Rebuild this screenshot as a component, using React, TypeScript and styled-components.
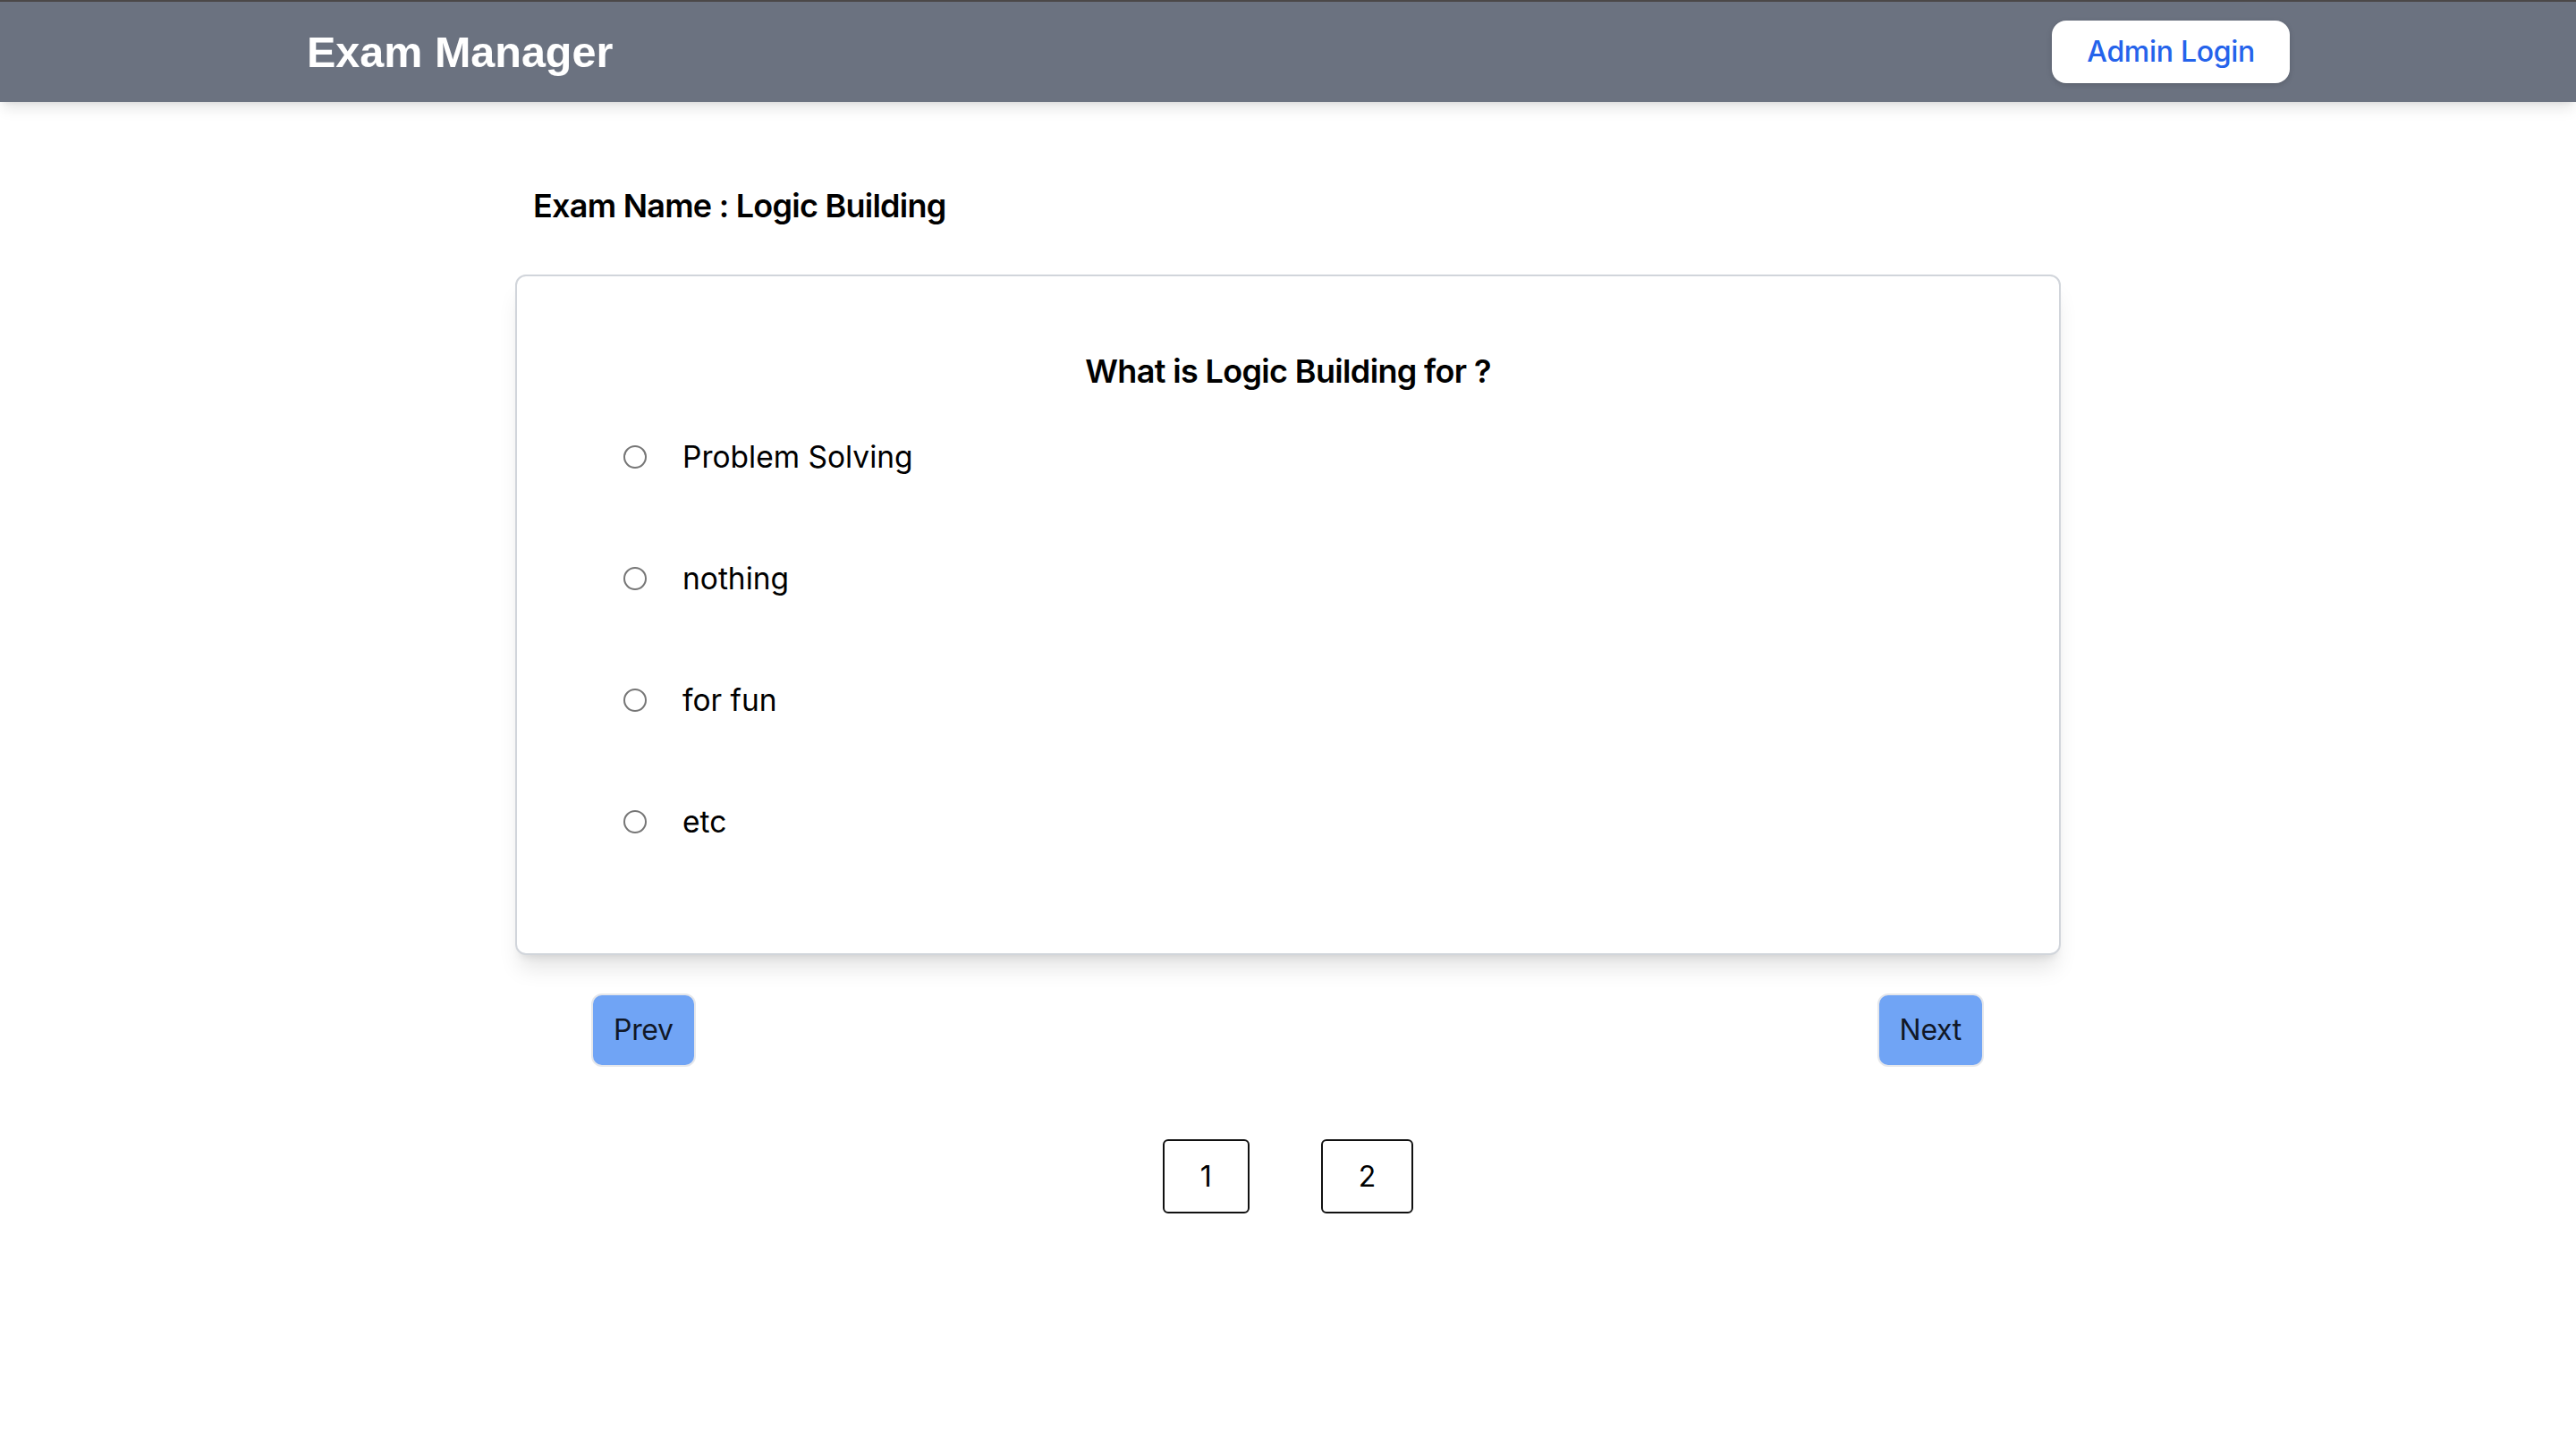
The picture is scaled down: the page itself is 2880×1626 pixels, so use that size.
import React, { useState } from 'react';
import styled, { createGlobalStyle } from 'styled-components';

const options = ['Problem Solving', 'nothing', 'for fun', 'etc'];
const pages = [1, 2];

const App: React.FC = () => {
  const [selected, setSelected] = useState<number | null>(null);

  return (
    <>
      <GlobalStyle />
      <Header>
        <Brand>Exam Manager</Brand>
        <AdminButton type="button">Admin Login</AdminButton>
      </Header>
      <Main>
        <ExamTitle>Exam Name : Logic Building</ExamTitle>
        <Card>
          <Question>What is Logic Building for ?</Question>
          <OptionList>
            {options.map((opt, i) => (
              <OptionRow key={opt}>
                <Radio
                  type="radio"
                  name="answer"
                  checked={selected === i}
                  onChange={() => setSelected(i)}
                />
                <OptionText>{opt}</OptionText>
              </OptionRow>
            ))}
          </OptionList>
        </Card>
        <NavRow>
          <NavButton type="button">Prev</NavButton>
          <NavButton type="button">Next</NavButton>
        </NavRow>
        <Pagination>
          {pages.map((p) => (
            <PageBox key={p} type="button">{p}</PageBox>
          ))}
        </Pagination>
      </Main>
    </>
  );
};

const GlobalStyle = createGlobalStyle`
  * {
    box-sizing: border-box;
  }

  body {
    margin: 0;
    background: #ffffff;
    font-family: Inter, "Liberation Sans", sans-serif;
    color: #000;
  }
`;

const Header = styled.header`
  height: 114px;
  background-color: #6b7280;
  border-top: 2px solid #4b4848;
  display: flex;
  align-items: center;
  justify-content: space-between;
  padding: 0 320px 0 343px;
  box-shadow: 0 10px 15px -3px rgba(0, 0, 0, 0.1), 0 4px 6px -4px rgba(0, 0, 0, 0.1);
  position: relative;
`;

const Brand = styled.h1`
  margin: 0;
  font-family: "Liberation Sans", Arial, sans-serif;
  font-size: 48.5px;
  font-weight: bold;
  color: #ffffff;
  line-height: 66px;
`;

const AdminButton = styled.button`
  background: #ffffff;
  border: none;
  border-radius: 16px;
  padding: 11px 39px;
  font-family: Inter, sans-serif;
  font-size: 32px;
  font-weight: 500;
  line-height: 48px;
  letter-spacing: -0.3px;
  color: #2563eb;
  box-shadow: 0 2px 6px rgba(0, 0, 0, 0.15);
  cursor: pointer;
`;

const Main = styled.main`
  width: 1728px;
  margin: 0 auto;
  padding-top: 88px;
`;

const ExamTitle = styled.h2`
  margin: 0 0 49px;
  padding-left: 20px;
  font-size: 36px;
  font-weight: 600;
  line-height: 56px;
  letter-spacing: -0.75px;
`;

const Card = styled.section`
  border: 2px solid #d1d5db;
  border-radius: 12px;
  padding: 78px 0 123px;
  background: #fff;
  box-shadow: 0 20px 25px -5px rgba(0, 0, 0, 0.1), 0 8px 10px -6px rgba(0, 0, 0, 0.1);
`;

const Question = styled.h3`
  margin: 0 0 44px;
  text-align: center;
  font-size: 36px;
  font-weight: 600;
  line-height: 56px;
  letter-spacing: -0.65px;
`;

const OptionList = styled.div`
  display: flex;
  flex-direction: column;
  gap: 88px;
  padding-left: 119px;
`;

const OptionRow = styled.label`
  display: flex;
  align-items: center;
  gap: 40px;
  height: 48px;
  cursor: pointer;
`;

const Radio = styled.input`
  appearance: none;
  margin: 0;
  width: 26px;
  height: 26px;
  border: 2px solid #767676;
  border-radius: 50%;
  background: #fff;
  cursor: pointer;

  &:checked {
    border-color: #2563eb;
    box-shadow: inset 0 0 0 5px #fff;
    background: #2563eb;
  }
`;

const OptionText = styled.span`
  font-size: 33.5px;
  line-height: 48px;
`;

const NavRow = styled.div`
  display: flex;
  justify-content: space-between;
  padding: 0 86px 0 85px;
  margin-top: 43px;
`;

const NavButton = styled.button`
  background-color: #70a4f5;
  border: 2px solid #e5e7eb;
  border-radius: 12px;
  padding: 15px 23px;
  font-family: Inter, sans-serif;
  font-size: 32px;
  line-height: 48px;
  letter-spacing: -0.3px;
  color: #111827;
  cursor: pointer;
`;

const Pagination = styled.div`
  display: flex;
  justify-content: center;
  margin-top: 81px;
`;

const PageBox = styled.button`
  margin: 0 40px;
  background: #fff;
  border: 2px solid #111;
  border-radius: 6px;
  padding: 16px 40px;
  font-family: Inter, sans-serif;
  font-size: 32px;
  line-height: 47px;
  color: #000;
  cursor: pointer;
`;

export default App;
